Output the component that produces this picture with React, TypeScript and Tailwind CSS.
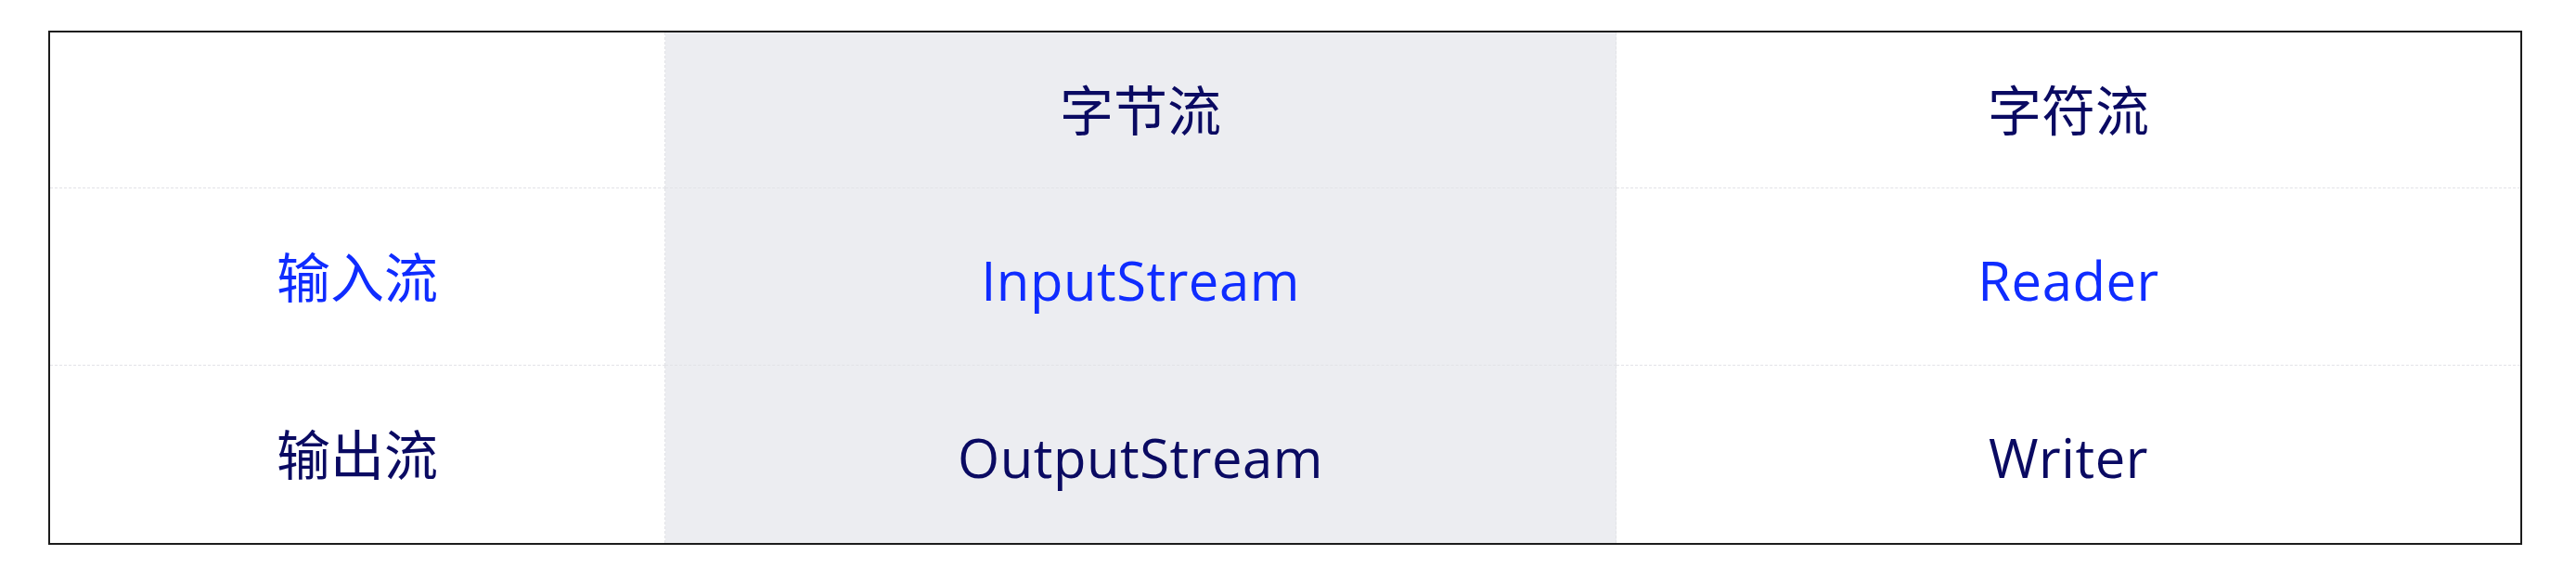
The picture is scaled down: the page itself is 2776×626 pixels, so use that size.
import React from "react";

type Cell = { text: string; tone: "navy" | "blue"; latin?: boolean };

const rows: Cell[][] = [
  [
    { text: "", tone: "navy" },
    { text: "字节流", tone: "navy" },
    { text: "字符流", tone: "navy" },
  ],
  [
    { text: "输入流", tone: "blue" },
    { text: "InputStream", tone: "blue", latin: true },
    { text: "Reader", tone: "blue", latin: true },
  ],
  [
    { text: "输出流", tone: "navy" },
    { text: "OutputStream", tone: "navy", latin: true },
    { text: "Writer", tone: "navy", latin: true },
  ],
];

const App: React.FC = () => {
  return (
    <div className="w-[2776px] h-[626px] bg-white pl-[52px] pt-[33px]">
      <div
        className="w-[2666px] border-2 border-[#1c1c1c] grid grid-cols-[663px_1025px_974px] grid-rows-[168px_191px_191px]"
        style={{ fontFamily: '"Comic Sans MS", "Open Sans", "Noto Sans CJK SC", sans-serif' }}
      >
        {rows.map((row, r) =>
          row.map((cell, c) => (
            <div
              key={`${r}-${c}`}
              className={`flex items-center justify-center text-[58px] border-dashed border-[#e2e3e7] ${
                r < 2 ? "border-b" : ""
              } ${c < 2 ? "border-r" : ""} ${c === 1 ? "bg-[#ecedf1]" : "bg-white"} ${
                cell.tone === "blue" ? "text-[#0f2cff]" : "text-[#0a0a62]"
              }`}
            >
              {/* latin labels sit a bit lower and heavier in the original */}
              <span className={cell.latin ? "font-medium tracking-[0.5px] pt-[6px]" : ""}>{cell.text}</span>
            </div>
          ))
        )}
      </div>
    </div>
  );
};

export default App;
